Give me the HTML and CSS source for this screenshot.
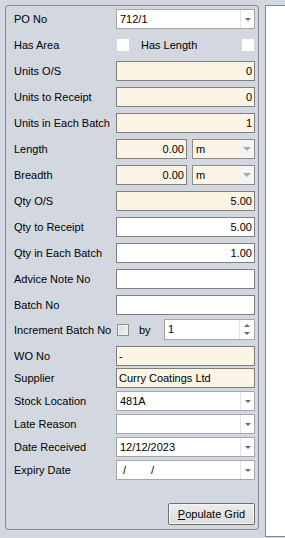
FILE: index.html
```html
<!DOCTYPE html>
<html lang="en">
<head>
  <meta charset="UTF-8">
  <title>Goods Receipt</title>
  <link rel="stylesheet" href="styles.css">
</head>
<body>
  <div class="group">
    <div class="row">
      <label>PO No</label>
      <div class="combo"><span class="combo-text">712/1</span><span class="combo-btn"><i class="arrow"></i></span></div>
    </div>

    <div class="row">
      <label>Has Area</label>
      <div class="pair">
        <span class="flat-check"></span>
        <span class="pair-label">Has Length</span>
        <span class="flat-check"></span>
      </div>
    </div>

    <div class="row"><label>Units O/S</label><input class="num cream" value="0" readonly></div>
    <div class="row"><label>Units to Receipt</label><input class="num cream" value="0" readonly></div>
    <div class="row"><label>Units in Each Batch</label><input class="num cream" value="1" readonly></div>

    <div class="row">
      <label>Length</label>
      <div class="measure">
        <input class="num cream short" value="0.00" readonly>
        <div class="combo cream disabled unit"><span class="combo-text">m</span><span class="combo-btn"><i class="arrow"></i></span></div>
      </div>
    </div>
    <div class="row">
      <label>Breadth</label>
      <div class="measure">
        <input class="num cream short" value="0.00" readonly>
        <div class="combo cream disabled unit"><span class="combo-text">m</span><span class="combo-btn"><i class="arrow"></i></span></div>
      </div>
    </div>

    <div class="row"><label>Qty O/S</label><input class="num cream" value="5.00" readonly></div>
    <div class="row"><label>Qty to Receipt</label><input class="num" value="5.00"></div>
    <div class="row"><label>Qty in Each Batch</label><input class="num" value="1.00"></div>
    <div class="row"><label>Advice Note No</label><input value=""></div>
    <div class="row"><label>Batch No</label><input value=""></div>

    <div class="row row-increment">
      <label>Increment Batch No</label>
      <div class="pair">
        <span class="check"></span>
        <span class="by">by</span>
        <div class="spin"><span class="combo-text">1</span><span class="spin-btn"><i class="up"></i><i class="down"></i></span></div>
      </div>
    </div>

    <div class="row row-wo"><label>WO No</label><input class="cream" value="-" readonly></div>
    <div class="row tight"><label>Supplier</label><input class="cream" value="Curry Coatings Ltd" readonly></div>
    <div class="row tight">
      <label>Stock Location</label>
      <div class="combo"><span class="combo-text">481A</span><span class="combo-btn"><i class="arrow"></i></span></div>
    </div>
    <div class="row tight">
      <label>Late Reason</label>
      <div class="combo"><span class="combo-text"></span><span class="combo-btn"><i class="arrow"></i></span></div>
    </div>
    <div class="row tight">
      <label>Date Received</label>
      <div class="combo"><span class="combo-text">12/12/2023</span><span class="combo-btn"><i class="arrow"></i></span></div>
    </div>
    <div class="row tight">
      <label>Expiry Date</label>
      <div class="combo"><span class="combo-text date-blank"><span class="slash">/</span><span class="slash">/</span></span><span class="combo-btn"><i class="arrow"></i></span></div>
    </div>

    <div class="actions">
      <button class="btn"><u>P</u>opulate Grid</button>
    </div>
  </div>

  <div class="grid-panel"></div>
</body>
</html>
```

FILE: styles.css
```css
:root {
  --bg: #d3d8e0;
  --cream: #fcf4e4;
  --field-border: #7f7f7f;
  --combo-border: #a3a6ab;
  --text: #000000;
}

* {
  margin: 0;
  padding: 0;
  box-sizing: border-box;
}

body {
  font-family: "Liberation Sans", Arial, sans-serif;
  font-size: 11px;
  color: var(--text);
  background: var(--bg);
  display: flex;
  gap: 6px;
  padding: 5px 0 0 5px;
  height: 538px;
  overflow: hidden;
}

.group {
  width: 254px;
  height: 525px;
  flex-shrink: 0;
  border: 1px solid #878b92;
  border-radius: 3px;
  padding: 3px 2px 0 8px;
  display: flex;
  flex-direction: column;
}

.row {
  display: flex;
  align-items: center;
  height: 20px;
  margin-bottom: 6px;
}

.row label {
  width: 102px;
  flex-shrink: 0;
  white-space: nowrap;
}

.row-increment {
  height: 21px;
  margin-top: -2px;
}

.row-wo {
  height: 19px;
  margin-bottom: 3px;
}

.row.tight {
  margin-bottom: 3px;
}

input {
  width: 139px;
  height: 20px;
  border: 1px solid var(--field-border);
  background: #ffffff;
  font: inherit;
  color: var(--text);
  padding: 0 2px;
  outline: none;
}

input.num {
  text-align: right;
}

input.cream {
  background: var(--cream);
}

input.short {
  width: 71px;
}

.measure {
  display: flex;
  gap: 5px;
  width: 139px;
}

.combo,
.spin {
  width: 139px;
  height: 20px;
  display: flex;
  border: 1px solid var(--combo-border);
  background: #ffffff;
}

.combo.cream {
  background: var(--cream);
}

.combo.unit {
  width: 63px;
  border-color: #8c8c8c;
}

.combo-text {
  flex: 1;
  padding: 0 3px;
  line-height: 18px;
  white-space: pre;
}

.date-blank {
  padding-left: 6px;
}

.slash {
  display: inline-block;
  width: 28px;
}

.combo-btn,
.spin-btn {
  width: 14px;
  border-left: 1px solid #e3e3e3;
  display: flex;
  align-items: center;
  justify-content: center;
}

.combo.disabled .combo-btn {
  background: #f4f4f4;
  border-left: none;
}

.arrow {
  width: 0;
  height: 0;
  border-left: 3px solid transparent;
  border-right: 3px solid transparent;
  border-top: 3px solid #6a6a6a;
}

.combo.disabled .arrow {
  border-left-width: 4px;
  border-right-width: 4px;
  border-top: 4px solid #a8a8a8;
}

.pair {
  display: flex;
  align-items: center;
  width: 139px;
}

.flat-check {
  width: 12px;
  height: 12px;
  background: #ffffff;
  margin-left: 1px;
}

.pair-label {
  margin-left: 12px;
  flex: 1;
}

.flat-check:last-child {
  margin-right: 1px;
}

.check {
  width: 12px;
  height: 12px;
  margin-left: 1px;
  border: 1px solid #8e8f8f;
  background: linear-gradient(135deg, #dcdcdc, #f4f4f4);
  box-shadow: inset 0 0 0 1px #f0f0f0;
}

.by {
  margin-left: 10px;
  width: 25px;
}

.spin {
  width: 91px;
  height: 21px;
}

.spin-btn {
  flex-direction: column;
  gap: 5px;
  width: 15px;
}

.up,
.down {
  width: 0;
  height: 0;
  border-left: 3px solid transparent;
  border-right: 3px solid transparent;
}

.up {
  border-bottom: 3px solid #6a6a6a;
}

.down {
  border-top: 3px solid #6a6a6a;
}

.actions {
  margin-top: auto;
  margin-bottom: 4px;
  display: flex;
  justify-content: flex-end;
  padding-right: 1px;
}

.btn {
  width: 87px;
  height: 22px;
  font: inherit;
  color: var(--text);
  border: 1px solid #707070;
  border-radius: 2px;
  background: linear-gradient(#ececec, #dcdcdc);
  box-shadow: inset 0 0 0 1px #f6f6f6;
}

.grid-panel {
  width: 20px;
  height: 532px;
  flex-shrink: 0;
  background: #ffffff;
  border: 1px solid #828790;
  border-right: none;
}
```
